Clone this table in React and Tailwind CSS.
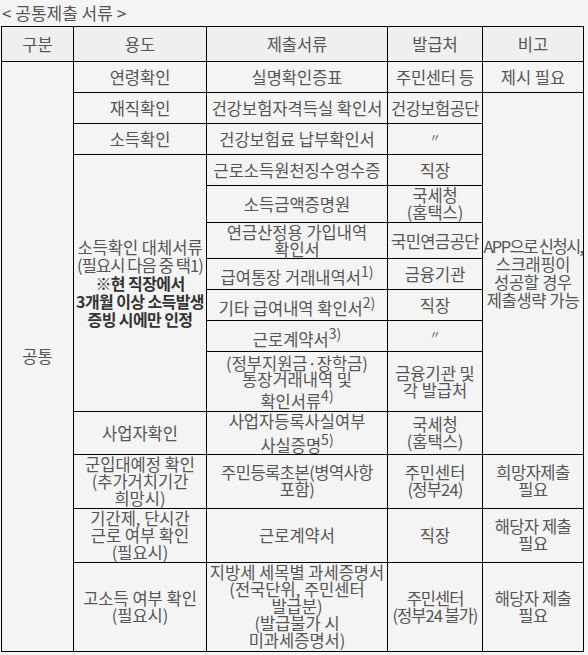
import React from "react";

const Sup = ({ children }) => (
  <span className="align-super text-[14px]">{children}</span>
);

const Ditto = () => <span className="text-[11px] relative -top-[3px]">〃</span>;

export default function App() {
  const td = "border border-black text-center align-middle px-0 whitespace-nowrap";
  return (
    <div
      className="bg-[#f4f4f4] w-[588px] h-[655px] text-[#555] text-[16.5px] leading-[18px] overflow-hidden"
      style={{ fontFamily: '"Noto Sans CJK KR", "Noto Sans", sans-serif' }}
    >
      <div className="h-[26px] pl-[2px] pt-[4px] leading-[18px] text-[17px]">&lt; 공통제출 서류 &gt;</div>
      <table className="ml-[1px] w-[582px] table-fixed border-collapse">
        <colgroup>
          <col className="w-[72px]" />
          <col className="w-[133px]" />
          <col className="w-[181px]" />
          <col className="w-[95px]" />
          <col className="w-[101px]" />
        </colgroup>
        <tbody>
          <tr className="h-[35px] bg-[#efefef]">
            <td className={td}>구분</td>
            <td className={td}>용도</td>
            <td className={td}>제출서류</td>
            <td className={td}>발급처</td>
            <td className={td}>비고</td>
          </tr>
          <tr className="h-[31px]">
            <td className={td} rowSpan={14}>공통</td>
            <td className={td}>연령확인</td>
            <td className={td}>실명확인증표</td>
            <td className={`${td} tracking-[-0.3px]`}>주민센터 등</td>
            <td className={td}>제시 필요</td>
          </tr>
          <tr className="h-[31px]">
            <td className={td}>재직확인</td>
            <td className={td}>건강보험자격득실 확인서</td>
            <td className={`${td} tracking-[-0.5px]`}>건강보험공단</td>
            <td className={`${td} tracking-[-0.3px]`} rowSpan={10}>
              <span className="tracking-[-1.6px]">APP으로 신청시,</span><br />스크래핑이<br />성공할 경우<br />제출생략 가능
            </td>
          </tr>
          <tr className="h-[31px]">
            <td className={td}>소득확인</td>
            <td className={td}>건강보험료 납부확인서</td>
            <td className={td}><Ditto /></td>
          </tr>
          <tr className="h-[31px]">
            <td className={td} rowSpan={7}>
              소득확인 대체서류<br />
              <span className="tracking-[-0.9px]">(필요시 다음 중 택1)</span><br />
              <span className="font-bold text-[#333] text-[16px] tracking-[-0.6px]">
                ※현 직장에서<br />3개월 이상 소득발생<br />증빙 시에만 인정
              </span>
            </td>
            <td className={td}>근로소득원천징수영수증</td>
            <td className={td}>직장</td>
          </tr>
          <tr className="h-[37px]">
            <td className={td}>소득금액증명원</td>
            <td className={`${td} leading-[17px]`}>국세청<br />(홈택스)</td>
          </tr>
          <tr className="h-[36px]">
            <td className={`${td} leading-[17px]`}>연금산정용 가입내역<br />확인서</td>
            <td className={`${td} tracking-[-0.5px]`}>국민연금공단</td>
          </tr>
          <tr className="h-[31px]">
            <td className={td}>급여통장 거래내역서<Sup>1)</Sup></td>
            <td className={td}>금융기관</td>
          </tr>
          <tr className="h-[31px]">
            <td className={td}>기타 급여내역 확인서<Sup>2)</Sup></td>
            <td className={td}>직장</td>
          </tr>
          <tr className="h-[31px]">
            <td className={td}>근로계약서<Sup>3)</Sup></td>
            <td className={td}><Ditto /></td>
          </tr>
          <tr className="h-[60px]">
            <td className={`${td} leading-[16px]`}>
              (정부지원금·장학금)<br />통장거래내역 및<br />확인서류<Sup>4)</Sup>
            </td>
            <td className={`${td} leading-[17px]`}>금융기관 및<br />각 발급처</td>
          </tr>
          <tr className="h-[42px]">
            <td className={td}>사업자확인</td>
            <td className={td}>
              사업자등록사실여부<br />사실증명<Sup>5)</Sup>
            </td>
            <td className={`${td} leading-[17px]`}>국세청<br />(홈택스)</td>
          </tr>
          <tr className="h-[54px]">
            <td className={`${td} leading-[17px]`}>
              군입대예정 확인<br />(추가거치기간<br />희망시)
            </td>
            <td className={`${td} leading-[17px] tracking-[-0.5px]`}>주민등록초본(병역사항<br />포함)</td>
            <td className={`${td} leading-[17px]`}>주민센터<br /><span className="tracking-[-0.8px]">(정부24)</span></td>
            <td className={`${td} leading-[17px] tracking-[-0.5px]`}>희망자제출<br />필요</td>
          </tr>
          <tr className="h-[54px]">
            <td className={`${td} leading-[17px]`}>
              기간제, 단시간<br />근로 여부 확인<br />(필요시)
            </td>
            <td className={td}>근로계약서</td>
            <td className={td}>직장</td>
            <td className={`${td} leading-[17px] tracking-[-0.5px]`}>해당자 제출<br />필요</td>
          </tr>
          <tr className="h-[89px]">
            <td className={`${td} leading-[17px]`}>
              고소득 여부 확인<br />(필요시)
            </td>
            <td className={`${td} leading-[17px]`}>
              지방세 세목별 과세증명서<br />(전국단위, 주민센터<br />발급분)<br />(발급불가 시<br />미과세증명서)
            </td>
            <td className={`${td} leading-[17px] tracking-[-1px]`}>주민센터<br />(정부24 불가)</td>
            <td className={`${td} leading-[17px] tracking-[-0.5px]`}>해당자 제출<br />필요</td>
          </tr>
        </tbody>
      </table>
    </div>
  );
}
